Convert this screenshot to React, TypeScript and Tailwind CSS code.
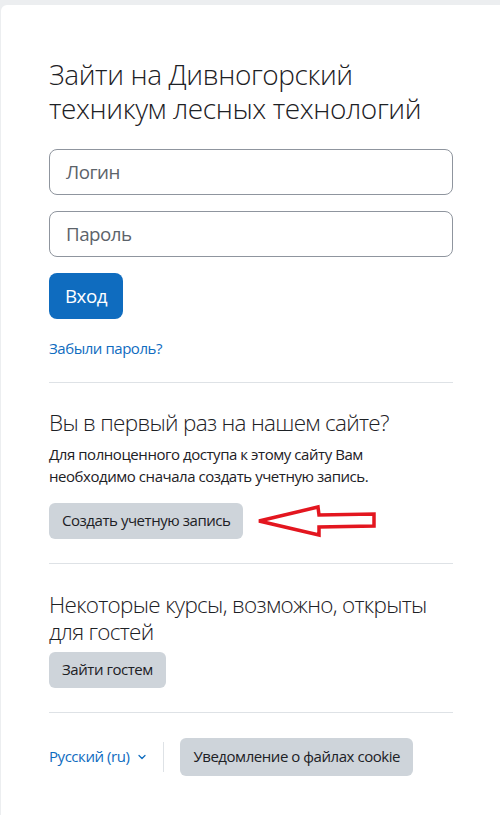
import React from 'react';
import { ChevronDown } from 'lucide-react';

const font = { fontFamily: '"Open Sans", "Noto Sans", sans-serif' };

const Divider = () => <div className="h-px w-full bg-[#dee2e6]" />;

const ArrowMark = () => (
  <svg width="124" height="36" viewBox="0 0 124 36" className="ml-[12px] shrink-0">
    <polygon
      points="4,18 63,4 64,12 119,11 119,23 64,24 64,32"
      fill="none"
      stroke="#e3161f"
      strokeWidth="3.5"
      strokeLinejoin="miter"
    />
  </svg>
);

export default function App() {
  return (
    <div className="min-h-[815px] bg-[#eceef0] pt-[5px] pl-[1px] text-[#1d2125]" style={font}>
      <div className="min-h-[810px] bg-white rounded-tl-[6px] pl-[48px] pt-[53px]">
        <div className="w-[404px]">
          <h1 className="text-[28px] leading-[1.2] tracking-[-0.4px] font-light">
            Зайти на Дивногорский техникум лесных технологий
          </h1>

          <div className="mt-[24px] flex flex-col gap-[16px]">
            <div className="h-[46px] rounded-[8px] border border-[#8f959e] px-[16px] flex items-center text-[18.75px] tracking-[-0.5px] text-[#5c636a]">
              Логин
            </div>
            <div className="h-[46px] rounded-[8px] border border-[#8f959e] px-[16px] flex items-center text-[18.75px] tracking-[-0.5px] text-[#5c636a]">
              Пароль
            </div>
            <div>
              <button className="h-[46px] px-[16px] rounded-[8px] bg-[#0f6cbf] text-white text-[18.75px] tracking-[-0.5px]">
                Вход
              </button>
            </div>
          </div>

          <a className="block mt-[18px] text-[15px] leading-[22.5px] tracking-[-0.45px] text-[#0f6cbf]">Забыли пароль?</a>

          <div className="mt-[22px]">
            <Divider />
          </div>

          <h2 className="mt-[26px] text-[22.5px] leading-[27px] tracking-[-0.7px] font-light">
            Вы в первый раз на нашем сайте?
          </h2>
          <p className="mt-[7px] text-[15px] leading-[22.5px] tracking-[-0.45px]">
            Для полноценного доступа к этому сайту Вам
            <br />
            необходимо сначала создать учетную запись.
          </p>
          <div className="mt-[15px] flex items-center">
            <button className="h-[36px] px-[13px] rounded-[6px] bg-[#ced4da] text-[15px] tracking-[-0.45px]">
              Создать учетную запись
            </button>
            <ArrowMark />
          </div>

          <div className="mt-[24px]">
            <Divider />
          </div>

          <h2 className="mt-[27px] text-[22.5px] leading-[27px] tracking-[-0.7px] font-light">
            Некоторые курсы, возможно, открыты для гостей
          </h2>
          <div className="mt-[7px]">
            <button className="h-[36px] px-[13px] rounded-[6px] bg-[#ced4da] text-[15px] tracking-[-0.45px]">
              Зайти гостем
            </button>
          </div>

          <div className="mt-[24px]">
            <Divider />
          </div>

          <div className="mt-[25px] flex items-center">
            <a className="flex items-center gap-[7px] text-[15px] tracking-[-0.45px] text-[#0f6cbf]">
              Русский (ru)
              <ChevronDown size={12} strokeWidth={2.5} className="text-[#0f6cbf]" />
            </a>
            <div className="ml-[15px] h-[30px] w-px bg-[#dee2e6]" />
            <button className="ml-[16px] h-[38px] px-[13px] rounded-[6px] bg-[#ced4da] text-[15px] tracking-[-0.45px]">
              Уведомление о файлах cookie
            </button>
          </div>
        </div>
      </div>
    </div>
  );
}
